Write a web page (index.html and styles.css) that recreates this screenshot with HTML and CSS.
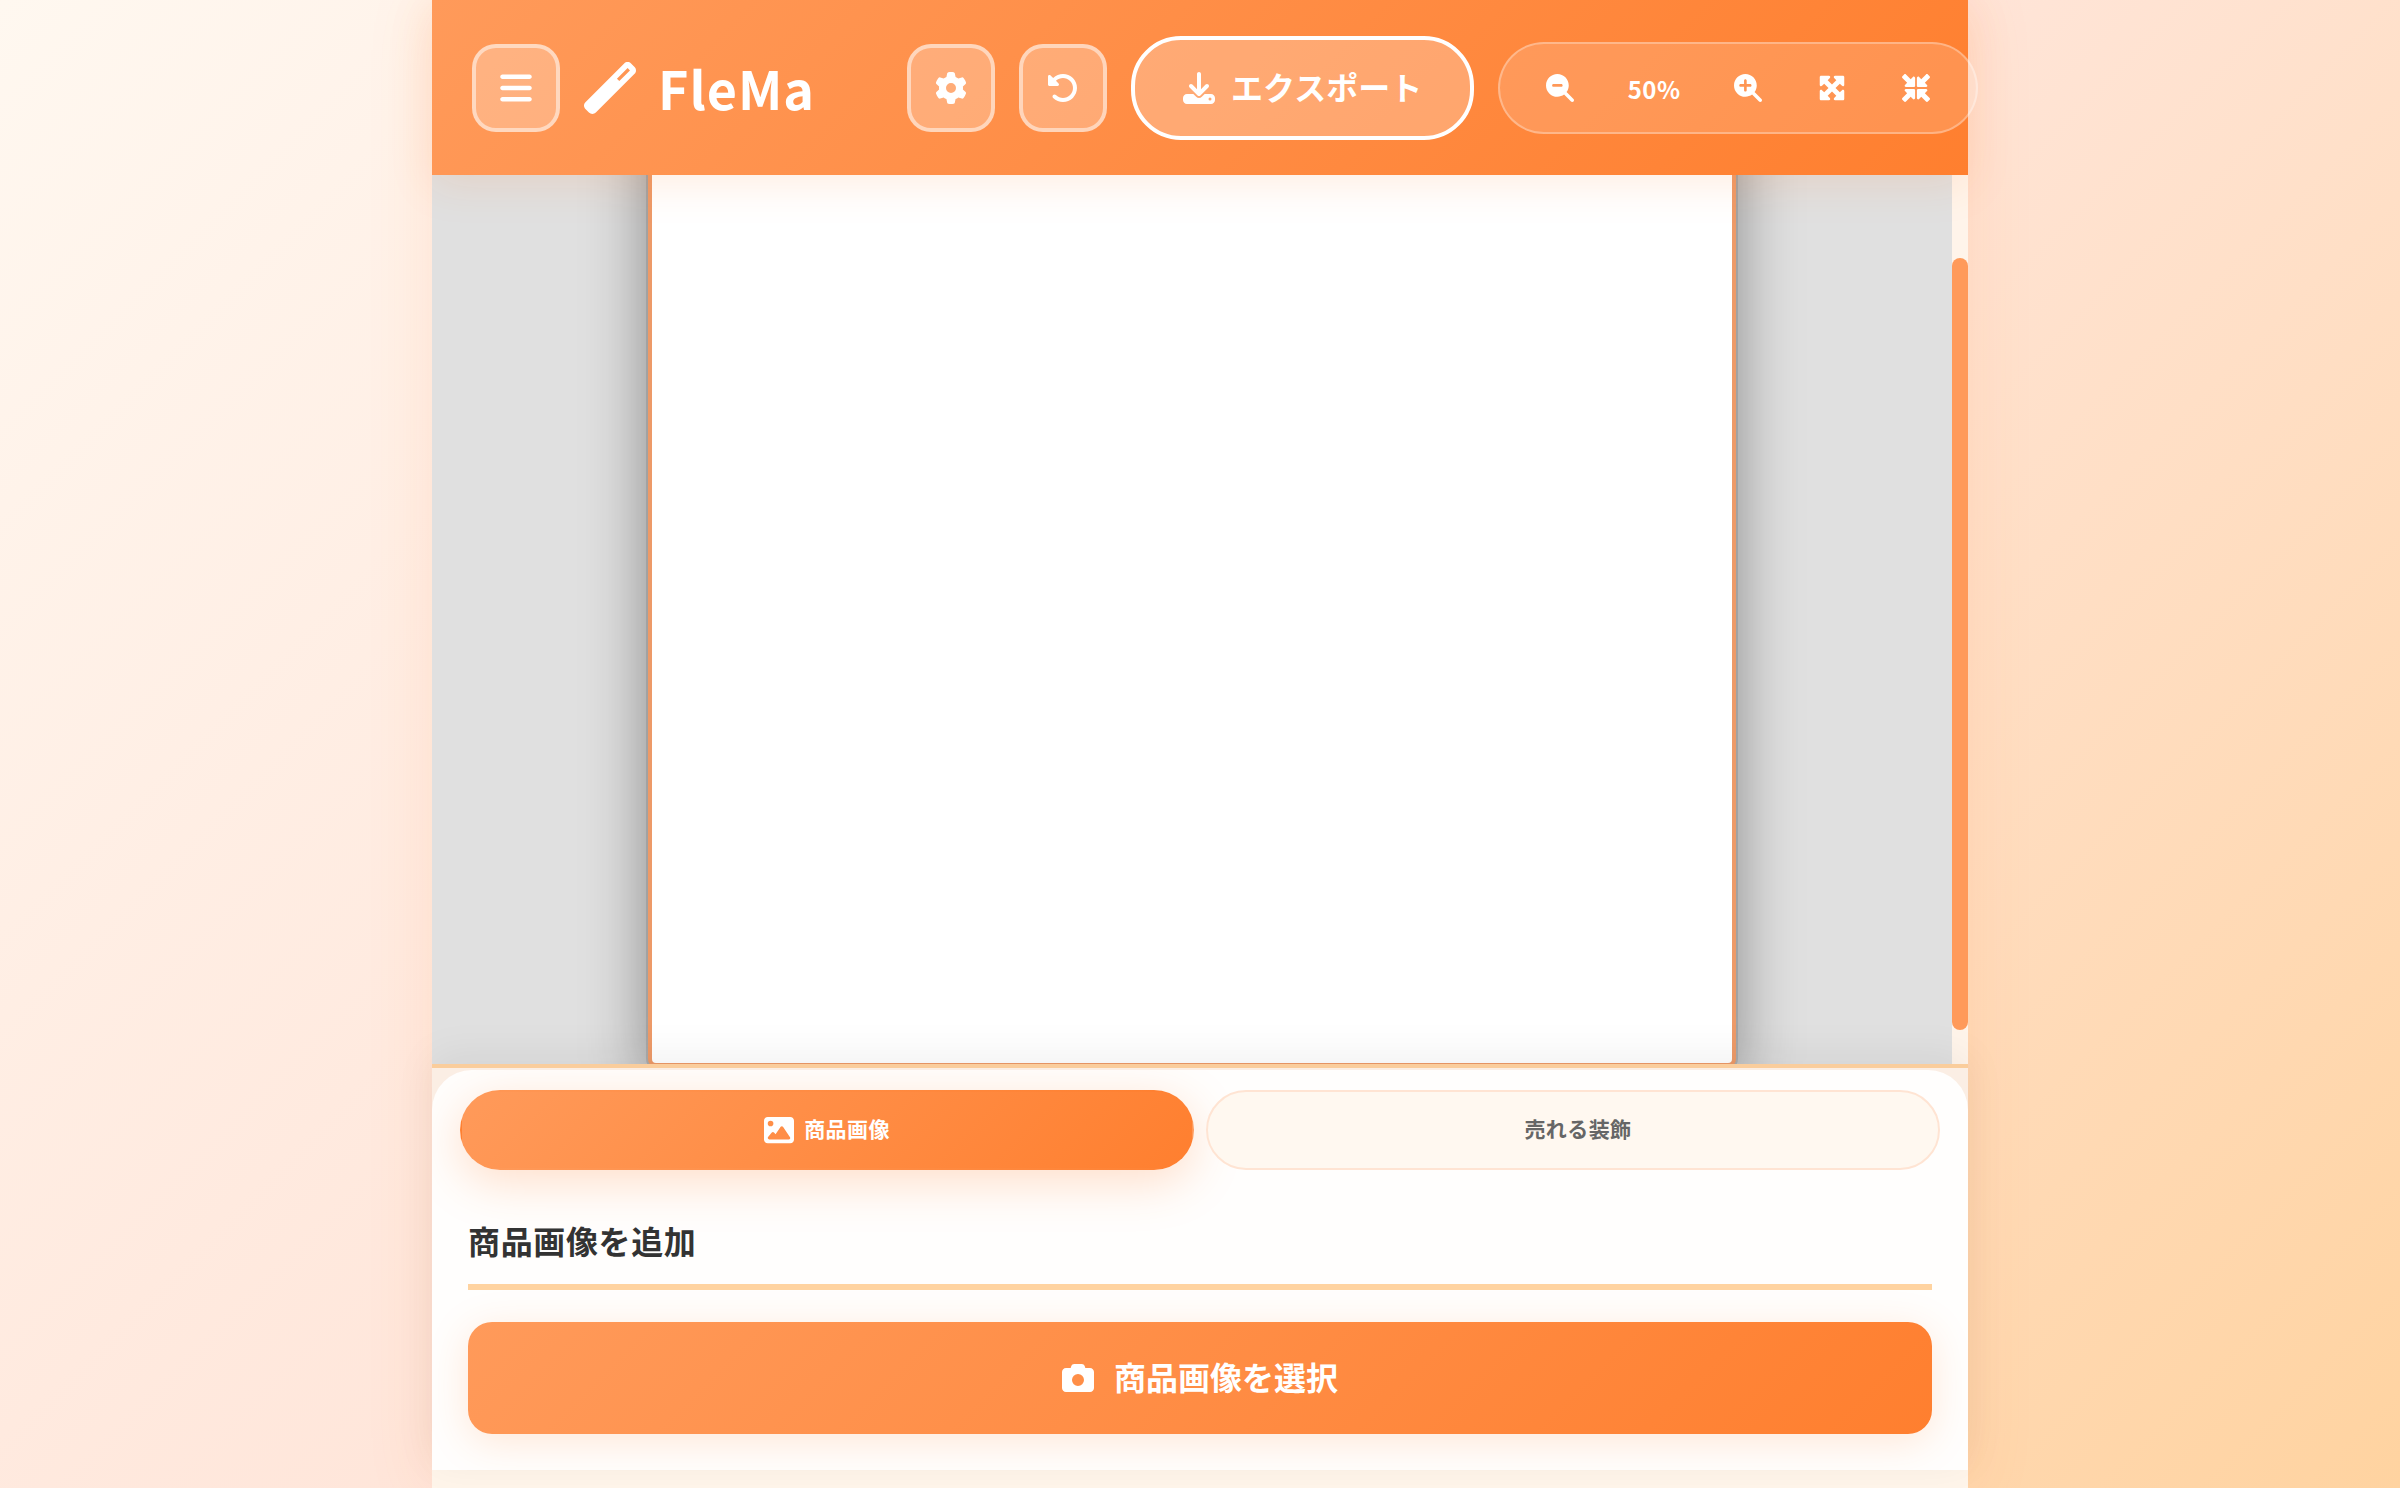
FILE: index.html
```html
<!DOCTYPE html>
<html lang="ja">
<head>
<meta charset="utf-8">
<meta name="viewport" content="width=device-width, initial-scale=1">
<title>FleMa</title>
<link rel="stylesheet" href="styles.css">
</head>
<body>
<div class="app">
  <header class="header">
    <div class="header-left">
      <button class="icon-btn" type="button" aria-label="メニュー">
        <svg class="icon-lg" viewBox="0 0 448 512" aria-hidden="true"><path d="M0 96C0 78.300 14.300 64 32 64H416c17.700 0 32 14.300 32 32s-14.300 32-32 32H32C14.300 128 0 113.700 0 96zM0 256c0-17.700 14.300-32 32-32H416c17.700 0 32 14.300 32 32s-14.300 32-32 32H32c-17.700 0-32-14.300-32-32zM448 416c0 17.700-14.300 32-32 32H32c-17.700 0-32-14.300-32-32s14.300-32 32-32H416c17.700 0 32 14.300 32 32z"/></svg>
      </button>
      <h1 class="logo">
        <svg class="logo-icon" viewBox="0 0 512 512" aria-hidden="true"><path d="M14.100 463.300c-18.700-18.700-18.700-49.100 0-67.900L395.400 14.100c18.700-18.700 49.100-18.700 67.900 0l34.600 34.600c18.700 18.700 18.700 49.100 0 67.900L116.500 497.900c-18.700 18.700-49.100 18.700-67.900 0L14.100 463.300zM347.600 187.600l105-105L429.400 59.300l-105 105 23.300 23.300z"/></svg>
        <span>FleMa</span>
      </h1>
    </div>
    <div class="header-actions">
      <button class="icon-btn" type="button" aria-label="設定">
        <svg class="icon" viewBox="0 0 512 512" aria-hidden="true"><path d="M495.900 166.600c3.200 8.700 .5 18.400-6.400 24.600l-43.300 39.400c1.100 8.300 1.700 16.800 1.700 25.400s-.6 17.100-1.700 25.400l43.300 39.400c6.900 6.200 9.600 15.900 6.400 24.600c-4.400 11.900-9.700 23.300-15.800 34.300l-4.700 8.100c-6.600 11-14 21.400-22.100 31.200c-5.900 7.200-15.700 9.600-24.500 6.800l-55.700-17.700c-13.400 10.300-28.200 18.900-44 25.400l-12.500 57.100c-2 9.100-9 16.300-18.200 17.800c-13.800 2.300-28 3.500-42.500 3.500s-28.700-1.200-42.500-3.500c-9.200-1.500-16.200-8.700-18.200-17.800l-12.500-57.100c-15.800-6.500-30.600-15.100-44-25.400L83.100 425.900c-8.800 2.800-18.600 .3-24.500-6.800c-8.100-9.800-15.500-20.200-22.100-31.200l-4.700-8.100c-6.100-11-11.400-22.400-15.800-34.300c-3.200-8.700-.5-18.400 6.400-24.600l43.300-39.400C64.600 273.100 64 264.600 64 256s.6-17.100 1.700-25.400L22.400 191.200c-6.900-6.200-9.600-15.900-6.400-24.600c4.400-11.900 9.700-23.300 15.800-34.300l4.700-8.100c6.600-11 14-21.400 22.100-31.200c5.900-7.200 15.700-9.600 24.500-6.800l55.700 17.700c13.400-10.300 28.200-18.900 44-25.400l12.500-57.100c2-9.100 9-16.300 18.200-17.800C227.300 1.200 241.500 0 256 0s28.700 1.200 42.500 3.500c9.200 1.500 16.200 8.700 18.200 17.800l12.500 57.100c15.800 6.500 30.600 15.100 44 25.400l55.700-17.700c8.800-2.800 18.600-.3 24.500 6.800c8.100 9.800 15.500 20.200 22.100 31.200l4.700 8.100c6.100 11 11.400 22.400 15.800 34.300zM256 336a80 80 0 1 0 0-160 80 80 0 1 0 0 160z"/></svg>
      </button>
      <button class="icon-btn" type="button" aria-label="元に戻す">
        <svg class="icon" viewBox="0 0 512 512" aria-hidden="true"><path d="M48.500 224H40c-13.300 0-24-10.700-24-24V72c0-9.700 5.800-18.500 14.800-22.200s19.300-1.700 26.200 5.200L98.600 96.600c87.600-86.500 228.700-86.200 315.800 1c87.500 87.500 87.500 229.300 0 316.800s-229.300 87.500-316.800 0c-12.500-12.500-12.500-32.800 0-45.300s32.800-12.500 45.300 0c62.500 62.500 163.800 62.500 226.300 0s62.500-163.800 0-226.300c-62.200-62.200-162.900-62.500-225.500-1L185 183c6.900 6.900 8.900 17.200 5.200 26.200s-12.500 14.800-22.200 14.800H48.500z"/></svg>
      </button>
      <button class="export-btn" type="button">
        <svg class="icon" viewBox="0 0 512 512" aria-hidden="true"><path d="M288 32c0-17.700-14.300-32-32-32s-32 14.300-32 32V274.700l-73.400-73.400c-12.500-12.500-32.800-12.500-45.300 0s-12.500 32.800 0 45.300l128 128c12.500 12.500 32.800 12.500 45.300 0l128-128c12.500-12.500 12.500-32.800 0-45.300s-32.800-12.500-45.300 0L288 274.700V32zM64 352c-35.300 0-64 28.700-64 64v32c0 35.300 28.700 64 64 64H448c35.300 0 64-28.700 64-64V416c0-35.300-28.700-64-64-64H346.500l-45.300 45.300c-25 25-65.500 25-90.500 0L165.500 352H64zm368 56a24 24 0 1 1 0 48 24 24 0 1 1 0-48z"/></svg>
        <span class="label">エクスポート</span>
      </button>
      <div class="zoom">
        <button class="zoom-btn" type="button" aria-label="縮小">
          <svg class="icon-sm" viewBox="0 0 512 512" aria-hidden="true"><path d="M416 208c0 45.900-14.900 88.300-40 122.700L502.600 457.400c12.500 12.500 12.500 32.800 0 45.300s-32.800 12.500-45.300 0L330.700 376c-34.400 25.200-76.800 40-122.700 40C93.100 416 0 322.900 0 208S93.100 0 208 0S416 93.100 416 208zM136 184c-13.300 0-24 10.700-24 24s10.700 24 24 24H280c13.300 0 24-10.700 24-24s-10.700-24-24-24H136z"/></svg>
        </button>
        <span class="zoom-level">50%</span>
        <button class="zoom-btn" type="button" aria-label="拡大">
          <svg class="icon-sm" viewBox="0 0 512 512" aria-hidden="true"><path d="M416 208c0 45.900-14.900 88.300-40 122.700L502.600 457.400c12.500 12.500 12.500 32.800 0 45.300s-32.800 12.500-45.300 0L330.700 376c-34.400 25.200-76.800 40-122.700 40C93.100 416 0 322.900 0 208S93.100 0 208 0S416 93.100 416 208zM184 296c0 13.300 10.700 24 24 24s24-10.700 24-24V232h64c13.300 0 24-10.700 24-24s-10.700-24-24-24H232V120c0-13.300-10.700-24-24-24s-24 10.700-24 24v64H120c-13.300 0-24 10.700-24 24s10.700 24 24 24h64v64z"/></svg>
        </button>
        <button class="zoom-btn" type="button" aria-label="全体表示">
          <svg class="icon-sm" viewBox="0 0 512 512" aria-hidden="true"><path d="M200 32H56C42.700 32 32 42.700 32 56V200c0 9.700 5.800 18.500 14.800 22.200s19.300 1.700 26.200-5.200l40-40 79 79-79 79L73 295c-6.900-6.900-17.200-8.900-26.200-5.200S32 302.300 32 312V456c0 13.300 10.700 24 24 24H200c9.700 0 18.500-5.800 22.200-14.800s1.700-19.300-5.200-26.200l-40-40 79-79 79 79-40 40c-6.900 6.900-8.900 17.200-5.200 26.200s12.500 14.800 22.200 14.800H456c13.300 0 24-10.700 24-24V312c0-9.700-5.800-18.500-14.800-22.200s-19.300-1.700-26.200 5.200l-40 40-79-79 79-79 40 40c6.900 6.900 17.200 8.900 26.200 5.200s14.800-12.500 14.800-22.200V56c0-13.300-10.700-24-24-24H312c-9.700 0-18.500 5.800-22.200 14.800s-1.700 19.300 5.200 26.200l40 40-79 79-79-79 40-40c6.900-6.900 8.900-17.200 5.200-26.200S209.700 32 200 32z"/></svg>
        </button>
        <button class="zoom-btn" type="button" aria-label="実寸表示">
          <svg class="icon-sm" viewBox="0 0 512 512" aria-hidden="true"><path d="M439 7c9.400-9.400 24.600-9.400 33.900 0l32 32c9.400 9.400 9.400 24.600 0 33.900l-87 87 39 39c6.900 6.900 8.900 17.200 5.200 26.200s-12.500 14.800-22.200 14.800H296c-13.300 0-24-10.700-24-24V72c0-9.700 5.800-18.500 14.800-22.200s19.300-1.700 26.200 5.200l39 39L439 7zM72 272H216c13.300 0 24 10.700 24 24V440c0 9.700-5.800 18.500-14.800 22.200s-19.300 1.700-26.200-5.200l-39-39L73 505c-9.400 9.400-24.600 9.400-33.900 0L7 473c-9.400-9.400-9.400-24.600 0-33.900l87-87L55 313c-6.900-6.900-8.900-17.200-5.200-26.200s12.500-14.800 22.200-14.800z"/><path transform="translate(512 0) scale(-1 1)" d="M439 7c9.400-9.400 24.600-9.400 33.900 0l32 32c9.400 9.400 9.400 24.600 0 33.900l-87 87 39 39c6.900 6.900 8.900 17.200 5.200 26.200s-12.500 14.800-22.200 14.800H296c-13.300 0-24-10.700-24-24V72c0-9.700 5.800-18.500 14.800-22.200s19.300-1.700 26.200 5.200l39 39L439 7zM72 272H216c13.300 0 24 10.700 24 24V440c0 9.700-5.800 18.500-14.800 22.200s-19.300 1.700-26.200-5.200l-39-39L73 505c-9.400 9.400-24.600 9.400-33.900 0L7 473c-9.400-9.400-9.400-24.600 0-33.900l87-87L55 313c-6.900-6.900-8.900-17.200-5.200-26.200s12.500-14.800 22.200-14.800z"/></svg>
        </button>
      </div>
    </div>
  </header>

  <main class="workspace">
    <div class="stage">
      <div class="artboard"></div>
    </div>
    <div class="scroll-track"><div class="scroll-thumb"></div></div>
  </main>

  <section class="panel">
    <div class="panel-body">
      <nav class="tabs">
        <button class="tab tab-active" type="button">
          <svg class="tab-icon" viewBox="0 0 512 512" aria-hidden="true"><path d="M0 96C0 60.700 28.700 32 64 32H448c35.300 0 64 28.700 64 64V416c0 35.300-28.700 64-64 64H64c-35.300 0-64-28.700-64-64V96zM323.800 202.500c-4.500-6.600-11.900-10.500-19.800-10.500s-15.400 3.900-19.800 10.500l-87 127.600L170.700 297c-4.600-5.700-11.500-9-18.700-9s-14.200 3.300-18.700 9l-64 80c-5.800 7.200-6.900 17.100-2.900 25.400s12.400 13.600 21.600 13.600h96 32H424c8.900 0 17.100-4.900 21.200-12.800s3.600-17.400-1.400-24.700l-120-176zM112 192a48 48 0 1 0 0-96 48 48 0 1 0 0 96z"/></svg>
          <span class="label">商品画像</span>
        </button>
        <button class="tab" type="button">
          <i></i>
          <span class="label">売れる装飾</span>
        </button>
      </nav>
      <div class="panel-content">
        <h2 class="section-title">商品画像を追加</h2>
        <button class="select-btn" type="button">
          <svg class="icon" viewBox="0 0 512 512" aria-hidden="true"><path d="M149.100 64.800L138.700 96H64C28.700 96 0 124.700 0 160V416c0 35.300 28.700 64 64 64H448c35.300 0 64-28.700 64-64V160c0-35.300-28.700-64-64-64H373.300L362.900 64.800C356.400 45.200 338.100 32 317.400 32H194.600c-20.700 0-39 13.200-45.500 32.800zM256 192a96 96 0 1 1 0 192 96 96 0 1 1 0-192z"/></svg>
          <span class="label">商品画像を選択</span>
        </button>
      </div>
    </div>
  </section>
</div>
</body>
</html>
```
FILE: styles.css
```css
:root {
  --orange-light: #ff9a5a;
  --orange: #ff7f2f;
  --peach: #ffd3a0;
  --cream: #fff8f0;
  --brand-gradient: linear-gradient(135deg, var(--orange-light) 0%, var(--orange) 100%);
}

* {
  box-sizing: border-box;
}

body {
  margin: 0;
  font-family: "Noto Sans CJK JP", sans-serif;
  color: #333;
  background: linear-gradient(135deg, #fff8f0 0%, #ffe5d9 50%, #ffd3a0 100%);
}

button {
  display: flex;
  align-items: center;
  justify-content: center;
  margin: 0;
  padding: 0;
  border: 0;
  font: inherit;
  color: inherit;
  background: none;
  cursor: pointer;
}

svg {
  display: block;
  flex: none;
  fill: currentColor;
}

.icon-sm { width: 28px; height: 28px; }
.icon { width: 32px; height: 32px; }
.icon-lg { width: 32px; height: 36px; }

.label {
  padding-bottom: 4px;
}

.app {
  display: flex;
  flex-direction: column;
  max-width: 1536px;
  height: 100vh;
  margin: 0 auto;
  padding-bottom: 18px;
  background: #fff5ea;
  box-shadow: 0 0 64px rgba(255, 127, 47, 0.12);
}

/* Header */
.header {
  position: relative;
  z-index: 2;
  display: flex;
  align-items: center;
  gap: 92px;
  padding: 36px 40px 35px;
  color: #fff;
  background: var(--brand-gradient);
  box-shadow: 0 8px 40px rgba(255, 127, 47, 0.15);
}

.header-left,
.header-actions {
  display: flex;
  flex: none;
  align-items: center;
  gap: 24px;
}

.logo {
  display: flex;
  align-items: center;
  gap: 22px;
  margin: 0;
  font-size: 52px;
  line-height: 64px;
  font-weight: 700;
  letter-spacing: 1px;
}

.logo-icon { width: 52px; height: 52px; }

.icon-btn {
  width: 88px;
  height: 88px;
  border: 4px solid rgba(255, 255, 255, 0.5);
  border-radius: 24px;
  background: rgba(255, 255, 255, 0.25);
}

.export-btn {
  gap: 16px;
  height: 104px;
  padding: 0 48px;
  border: 4px solid #fff;
  border-radius: 50px;
  font-size: 32px;
  font-weight: 600;
  background: rgba(255, 255, 255, 0.25);
}

.zoom {
  display: flex;
  align-items: center;
  gap: 12px;
  height: 92px;
  padding: 0 24px;
  border: 2px solid rgba(255, 255, 255, 0.3);
  border-radius: 46px;
  background: rgba(255, 255, 255, 0.15);
}

.zoom-btn {
  width: 72px;
  height: 72px;
}

.zoom-level {
  width: 92px;
  font-size: 24px;
  font-weight: 600;
  letter-spacing: 0.02em;
  text-align: center;
}

/* Canvas */
.workspace {
  display: flex;
  flex: 1;
  min-height: 0;
}

.stage {
  display: flex;
  flex: 1;
  align-items: flex-end;
  justify-content: center;
  overflow: hidden;
  background: #e0e0e0;
}

.artboard {
  flex: none;
  width: 1088px;
  height: 1088px;
  max-width: 100%;
  margin-bottom: -3px;
  border: 4px solid #ed9a68;
  border-radius: 8px;
  background: #fff;
  box-shadow: 0 0 0 2px rgba(0, 0, 0, 0.1), 0 16px 64px rgba(0, 0, 0, 0.4);
}

.scroll-track {
  width: 16px;
  padding: 83px 0 34px;
  background: #fff4ea;
}

.scroll-thumb {
  height: 100%;
  border-radius: 8px;
  background: var(--orange-light);
}

/* Bottom panel */
.panel {
  position: relative;
  z-index: 1;
  padding-top: 2px;
  border-top: 4px solid #facd9c;
  background: #fbeee4;
  box-shadow: 0 -8px 40px rgba(0, 0, 0, 0.06);
}

.panel-body {
  overflow: hidden;
  padding-top: 20px;
  border-radius: 40px 40px 0 0;
  background: #fffefd;
}

.tabs {
  display: flex;
  gap: 12px;
  padding: 0 28px;
}

.tab {
  flex: 1;
  gap: 10px;
  height: 80px;
  border: 2px solid #ffe4d3;
  border-radius: 40px;
  font-size: 21px;
  font-weight: 600;
  letter-spacing: 0.02em;
  color: #666;
  background: var(--cream);
}

.tab-active {
  border-color: transparent;
  color: #fff;
  background: var(--brand-gradient);
  box-shadow: 0 12px 48px rgba(255, 127, 47, 0.25);
}

.tab-icon { width: 30px; height: 30px; }

.panel-content {
  padding: 48px 36px 36px;
}

.section-title {
  margin: 0 0 32px;
  padding-bottom: 22px;
  border-bottom: 6px solid var(--peach);
  font-size: 32px;
  line-height: 44px;
  font-weight: 700;
  letter-spacing: 0.02em;
}

.select-btn {
  gap: 20px;
  width: 100%;
  height: 112px;
  border-radius: 24px;
  font-size: 32px;
  font-weight: 600;
  color: #fff;
  background: var(--brand-gradient);
  box-shadow: 0 8px 40px rgba(255, 127, 47, 0.18);
}
```
